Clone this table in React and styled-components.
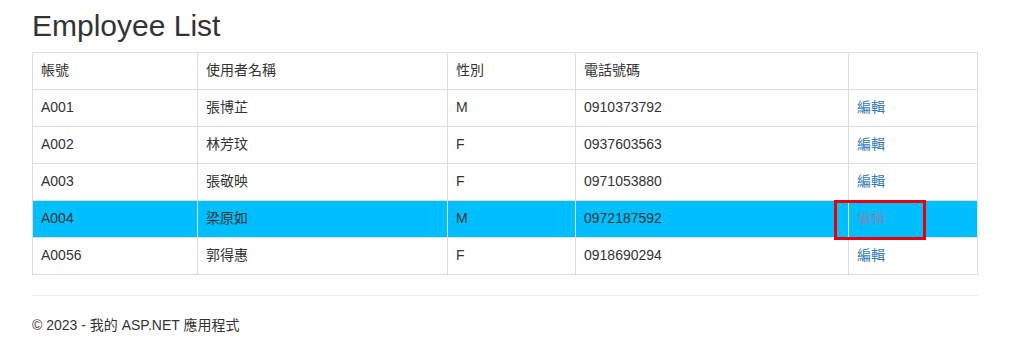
import styled, { createGlobalStyle } from "styled-components";

const GlobalStyle = createGlobalStyle`
  html, body {
    margin: 0;
    padding: 0;
    background: #fff;
  }
  body {
    font-family: "Liberation Sans", Arial, "Noto Sans CJK TC", sans-serif;
    font-size: 14px;
    line-height: 1.42857;
    color: #333;
  }
`;

const Page = styled.div`
  width: 946px;
  padding: 0 32px;
`;

const Title = styled.h2`
  font-size: 30px;
  font-weight: 500;
  line-height: 1.1;
  margin: 9px 0 10px;
  color: #333;
`;

const Table = styled.table`
  width: 100%;
  border-collapse: collapse;
  border: 1px solid #ddd;
  table-layout: fixed;
`;

const Th = styled.th`
  text-align: left;
  font-weight: normal;
  padding: 8px;
  border: 1px solid #ddd;
  border-bottom-width: 1px;
`;

const Row = styled.tr`
  background: ${(p) => (p.$active ? "#00bfff" : "#fff")};
`;

const Td = styled.td`
  padding: 8px;
  border: 1px solid #ddd;
  position: relative;
`;

const EditLink = styled.a`
  color: ${(p) => (p.$muted ? "#6d8fbf" : "#337ab7")};
  text-decoration: none;
  cursor: pointer;
`;

const Marker = styled.span`
  position: absolute;
  left: -15px;
  top: -1px;
  width: 92px;
  height: 40px;
  box-sizing: border-box;
  border: 3px solid #e8000b;
  pointer-events: none;
`;

const Divider = styled.hr`
  margin: 20px 0;
  border: 0;
  border-top: 1px solid #eee;
`;

const Footer = styled.footer`
  p {
    margin: 0;
  }
`;

const employees = [
  { id: "A001", name: "張博芷", gender: "M", phone: "0910373792" },
  { id: "A002", name: "林芳玟", gender: "F", phone: "0937603563" },
  { id: "A003", name: "張敬映", gender: "F", phone: "0971053880" },
  { id: "A004", name: "梁原如", gender: "M", phone: "0972187592", active: true },
  { id: "A0056", name: "郭得惠", gender: "F", phone: "0918690294" },
];

export default function App() {
  return (
    <>
      <GlobalStyle />
      <Page>
        <Title>Employee List</Title>
        <Table>
          <colgroup>
            <col style={{ width: 165 }} />
            <col style={{ width: 250 }} />
            <col style={{ width: 128 }} />
            <col style={{ width: 273 }} />
            <col />
          </colgroup>
          <thead>
            <tr>
              <Th>帳號</Th>
              <Th>使用者名稱</Th>
              <Th>性別</Th>
              <Th>電話號碼</Th>
              <Th></Th>
            </tr>
          </thead>
          <tbody>
            {employees.map((e) => (
              <Row key={e.id} $active={e.active}>
                <Td>{e.id}</Td>
                <Td>{e.name}</Td>
                <Td>{e.gender}</Td>
                <Td>{e.phone}</Td>
                <Td>
                  {e.active && <Marker />}
                  <EditLink $muted={e.active}>編輯</EditLink>
                </Td>
              </Row>
            ))}
          </tbody>
        </Table>
        <Divider />
        <Footer>
          <p>© 2023 - 我的 ASP.NET 應用程式</p>
        </Footer>
      </Page>
    </>
  );
}
